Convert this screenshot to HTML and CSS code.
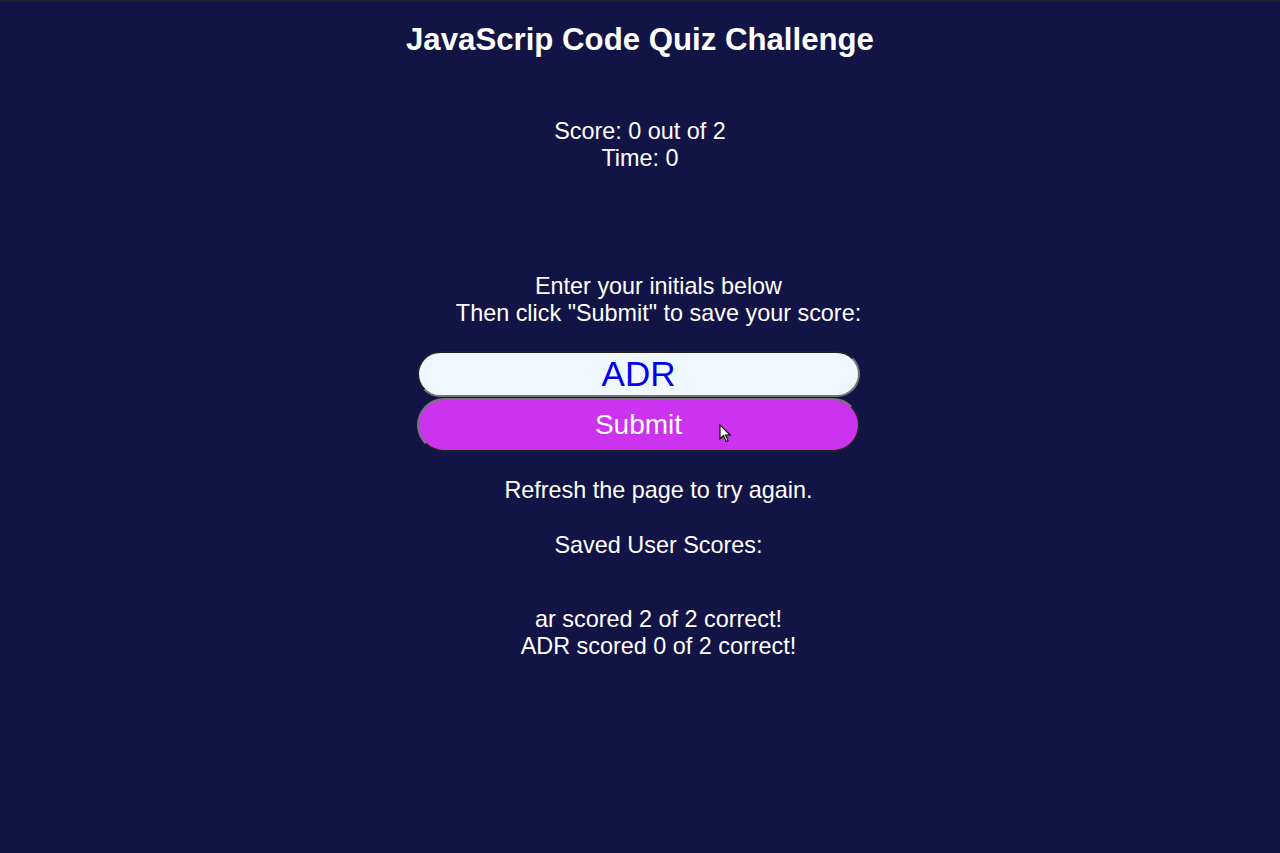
FILE: index.html
```html
<!DOCTYPE html>
<html lang="en">
<head>
<meta charset="utf-8">
<title>JavaScrip Code Quiz Challenge</title>
<link rel="stylesheet" href="styles.css">
</head>
<body>
<main class="page">
  <h1 class="title">JavaScrip Code Quiz Challenge</h1>
  <div class="status">
    <div>Score: 0 out of 2</div>
    <div>Time: 0</div>
  </div>
  <section class="final">
    <p class="msg">Enter your initials below<br>Then click "Submit" to save your score:</p>
    <form class="form">
      <input class="initials" type="text" value="ADR">
      <div class="btn-wrap">
        <button class="submit" type="button">Submit</button>
        <svg class="cursor" width="13" height="20" viewBox="0 0 13 20"><path d="M1 1 L1 15 L4.5 11.5 L7 17.5 L9 16.6 L6.6 11 L11.2 11 Z" fill="#fff" stroke="#000" stroke-width="1.1" stroke-linejoin="miter"/></svg>
      </div>
    </form>
    <p class="msg refresh">Refresh the page to try again.</p>
    <p class="msg saved">Saved User Scores:</p>
    <ul class="scores">
      <li>ar scored 2 of 2 correct!</li>
      <li>ADR scored 0 of 2 correct!</li>
    </ul>
  </section>
</main>
</body>
</html>
```
FILE: styles.css
```css
html, body {
  margin: 0;
  padding: 0;
}
body {
  background: #131446;
  border-top: 2px solid #222226;
  min-height: 851px;
  box-sizing: border-box;
  color: #ffffff;
  font-family: "Liberation Sans", Arial, sans-serif;
}
.page {
  display: flex;
  flex-direction: column;
  align-items: center;
}
.title {
  margin: 20px 0 0;
  font-size: 31.2px;
  line-height: 36px;
  font-weight: bold;
}
.status {
  margin-top: 60px;
  font-size: 23.4px;
  line-height: 27px;
  text-align: center;
}
.final {
  margin-top: 101px;
  display: flex;
  flex-direction: column;
  align-items: center;
  width: 100%;
}
.msg {
  margin: 0;
  padding-left: 37px;
  font-size: 23.4px;
  line-height: 27px;
  text-align: center;
}
.form {
  margin-top: 24px;
  display: flex;
  flex-direction: column;
  align-items: center;
}
.initials {
  box-sizing: border-box;
  width: 443px;
  height: 46px;
  margin-left: -3px;
  border: 2px inset #767676;
  border-radius: 23px;
  background: #f0f8ff;
  color: #0000ee;
  font-family: "Liberation Sans", Arial, sans-serif;
  font-size: 35px;
  text-align: center;
  padding: 0;
  outline: none;
}
.btn-wrap {
  position: relative;
  margin-top: 1px;
}
.submit {
  box-sizing: border-box;
  width: 443px;
  height: 54px;
  margin-left: -3px;
  border: 2px outset #767676;
  border-radius: 27px;
  background: #cc33ee;
  color: #ffffff;
  font-family: "Liberation Sans", Arial, sans-serif;
  font-size: 28px;
  padding: 0;
}
.cursor {
  position: absolute;
  left: 299px;
  top: 26px;
}
.refresh {
  margin-top: 25px;
}
.saved {
  margin-top: 28px;
}
.scores {
  list-style: none;
  margin: 47px 0 0;
  padding: 0 0 0 37px;
  font-size: 23.4px;
  line-height: 27px;
  text-align: center;
}
```
